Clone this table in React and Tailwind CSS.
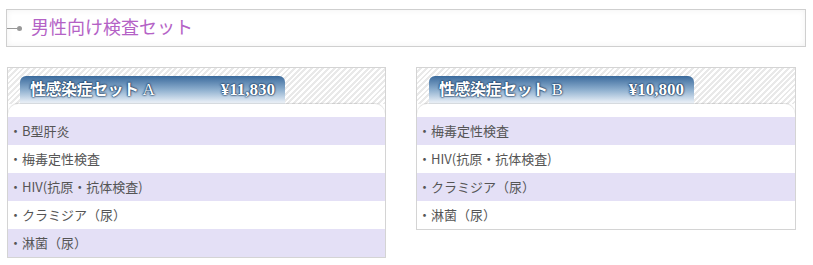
import React from 'react';

const sets = [
  {
    name: '性感染症セット',
    letter: 'A',
    price: '¥11,830',
    items: ['B型肝炎', '梅毒定性検査', 'HIV(抗原・抗体検査)', 'クラミジア（尿）', '淋菌（尿）'],
  },
  {
    name: '性感染症セット',
    letter: 'B',
    price: '¥10,800',
    items: ['梅毒定性検査', 'HIV(抗原・抗体検査)', 'クラミジア（尿）', '淋菌（尿）'],
  },
];

const serif = "font-['Liberation_Serif','Noto_Sans_CJK_JP',serif]";

const SetCard = ({ set, className }) => (
  <div className={`border border-[#d4d4d4] bg-white ${className}`}>
    <div className="h-[36px] pt-[8px] pl-[12px] [background-image:repeating-linear-gradient(135deg,#ffffff_0px,#ffffff_2px,#e9e9e9_2px,#e9e9e9_4px)]">
      <div className="flex h-[28px] w-[265px] items-center justify-between rounded-t-[6px] bg-gradient-to-b from-[#3a6a9c] via-[#8fb0cf] to-[#f4f7fb] px-[10px] text-white [text-shadow:0_0_2px_#17385f,0_0_2px_#17385f,0_0_1px_#17385f]">
        <span className={`${serif} text-[16px] font-bold tracking-[-0.5px]`}>
          {set.name}<span className="ml-[4px] font-normal text-[17px]">{set.letter}</span>
        </span>
        <span className={`${serif} text-[17px] font-bold`}>{set.price}</span>
      </div>
    </div>
    <div className="h-[13px] rounded-t-[10px] bg-white shadow-[0_-1px_1px_rgba(0,0,0,0.12)]" />
    <ul className="font-['Noto_Sans_CJK_JP',sans-serif] text-[13px] text-[#555]">
      {set.items.map((item, i) => (
        <li
          key={item}
          className={`flex h-[28px] items-center pl-px ${i % 2 === 0 ? 'bg-[#e4e0f6]' : 'bg-white'}`}
        >
          ・{item}
        </li>
      ))}
    </ul>
  </div>
);

export default function App() {
  return (
    <div className="w-[813px] h-[265px] bg-white pt-[9px]">
      <div className="ml-[6px] flex h-[38px] w-[800px] items-center border border-[#cfcfcf] bg-white shadow-[inset_0_0_6px_rgba(0,0,0,0.06)]">
        <div className="flex items-center">
          <div className="h-px w-[10px] bg-[#999]" />
          <div className="h-[5px] w-[5px] rounded-full bg-[#999]" />
        </div>
        <h2 className={`${serif} ml-[9px] text-[18px] text-[#b462c6]`}>男性向け検査セット</h2>
      </div>
      <div className="mt-[20px] flex items-start pl-[7px]">
        <SetCard set={sets[0]} className="w-[379px]" />
        <SetCard set={sets[1]} className="ml-[30px] w-[380px]" />
      </div>
    </div>
  );
}
